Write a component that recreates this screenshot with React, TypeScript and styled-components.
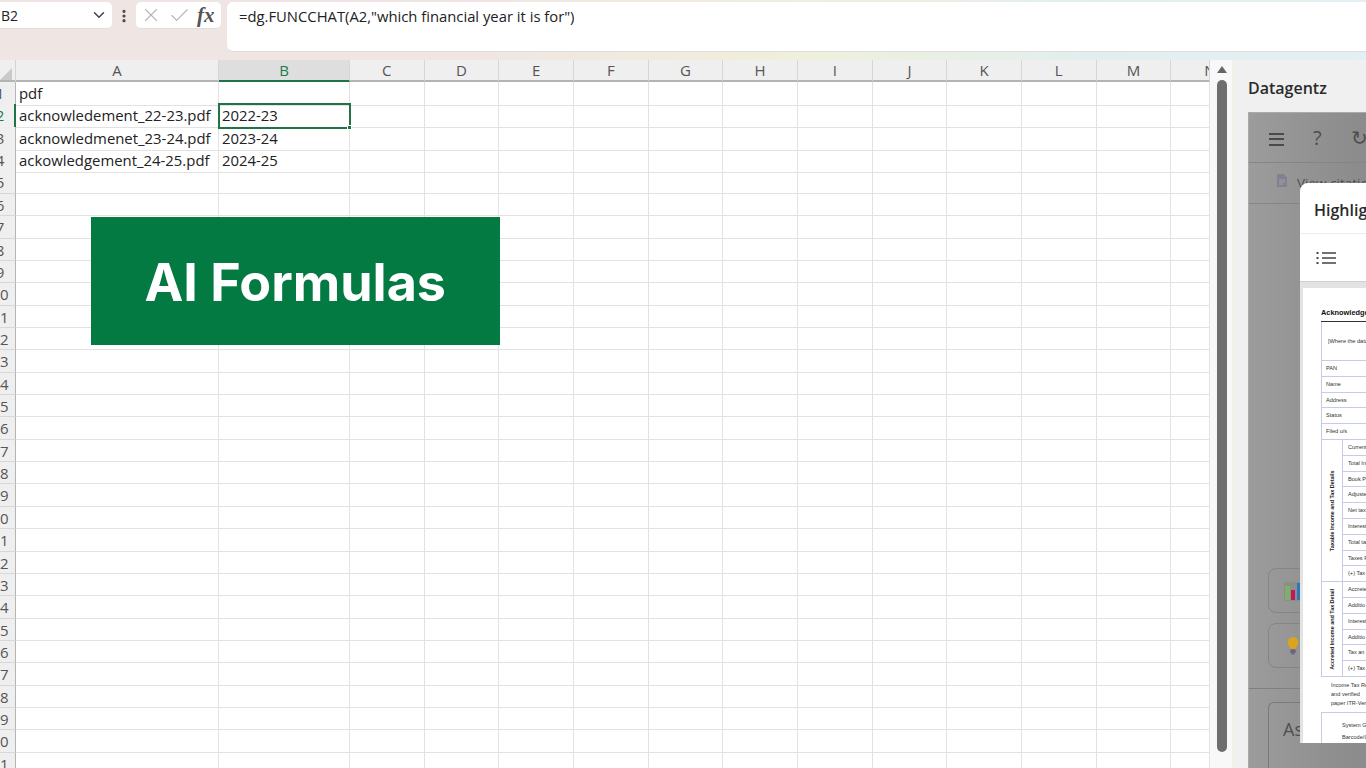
import React from 'react';
import styled, {createGlobalStyle} from 'styled-components';
import {ChevronDown, X, Check, MoreVertical} from 'lucide-react';

const GlobalStyle = createGlobalStyle`
  html, body {
    margin: 0;
    padding: 0;
    background: #fff;
  }
  * {
    box-sizing: border-box;
  }
`;

const Page = styled.div`
  width: 1366px;
  height: 768px;
  overflow: hidden;
  display: flex;
  flex-direction: column;
  font-family: "Open Sans", "Noto Sans", sans-serif;
  background: #f0f0f0;
`;

const FormulaArea = styled.header`
  height: 60px;
  flex: none;
  display: flex;
  align-items: flex-start;
  padding-top: 2px;
  background: linear-gradient(90deg, #efe6e4 0%, #efe6e3 35%, #f1ebdd 50%, #eef0dc 60%, #e2eeee 80%, #e3eff2 100%);
`;

const NameBox = styled.div`
  width: 112px;
  height: 27px;
  flex: none;
  background: #fff;
  border-radius: 0 5px 5px 0;
  border-bottom: 1px solid #ddd;
  display: flex;
  align-items: center;
  justify-content: space-between;
  padding: 0 4px 0 1px;
  font-size: 14px;
  color: #222;
`;

const Grip = styled.div`
  width: 24px;
  height: 27px;
  flex: none;
  display: flex;
  align-items: center;
  justify-content: center;
  color: #444;
`;

const FxBox = styled.div`
  width: 85px;
  height: 27px;
  flex: none;
  background: #fff;
  border-radius: 5px;
  border-bottom: 1px solid #ddd;
  display: flex;
  align-items: center;
  gap: 6px;
  padding-left: 4px;
  color: #b5b5b5;
`;

const FxLabel = styled.span`
  font-family: "Liberation Serif", serif;
  font-style: italic;
  font-weight: 700;
  font-size: 21px;
  color: #555;
`;

const FormulaInput = styled.div`
  flex: 1;
  height: 50px;
  margin-left: 6px;
  background: #fff;
  border-radius: 6px 0 0 6px;
  border-bottom: 1px solid #ddd;
  padding: 4px 0 0 12px;
  font-size: 14.8px;
  line-height: 20px;
  color: #222;
`;

const Workspace = styled.main`
  flex: 1;
  min-height: 0;
  display: flex;
`;

const Sheet = styled.section`
  position: relative;
  width: 1210px;
  flex: none;
  overflow: hidden;
  background: #fff;
`;

const COLS = '16px 203px 131px repeat(11, 74.67px) 39px';

const HeaderRow = styled.div`
  display: grid;
  grid-template-columns: ${COLS};
  height: 22px;
  background: #efefef;
  border-bottom: 2px solid #b4b4b4;
`;

const Corner = styled.div`
  position: relative;
  border-right: 1px solid #d4d4d4;
  &::after {
    content: '';
    position: absolute;
    right: 3px;
    bottom: 2px;
    border-style: solid;
    border-width: 0 0 12px 12px;
    border-color: transparent transparent #c9c9c9 transparent;
  }
`;

const ColHead = styled.div<{ $active?: boolean; $clip?: boolean }>`
  display: flex;
  align-items: center;
  justify-content: ${p => (p.$clip ? 'flex-start' : 'center')};
  padding-left: ${p => (p.$clip ? '33px' : '0')};
  overflow: hidden;
  height: 22px;
  font-size: 15px;
  color: ${p => (p.$active ? '#1f7a4d' : '#555')};
  background: ${p => (p.$active ? '#dedede' : 'transparent')};
  border-right: 1px solid #d6d6d6;
  border-bottom: 2px solid ${p => (p.$active ? '#217346' : '#b4b4b4')};
`;

const Row = styled.div`
  display: grid;
  grid-template-columns: ${COLS};
  height: 22.37px;
`;

const RowHead = styled.div<{ $active?: boolean }>`
  position: relative;
  background: #efefef;
  border-right: ${p => (p.$active ? '2px solid #217346' : '1px solid #b4b4b4')};
  border-bottom: 1px solid #d8d8d8;
  overflow: hidden;
  font-size: 15px;
  line-height: 23px;
  color: ${p => (p.$active ? '#1f7a4d' : '#555')};
  > span {
    display: block;
    width: 32px;
    margin-left: -16px;
    text-align: center;
  }
`;

const Cell = styled.div<{ $selected?: boolean }>`
  position: relative;
  padding: 0 3px;
  border-right: 1px solid #e2e2e2;
  border-bottom: 1px solid #e2e2e2;
  font-size: 14.9px;
  line-height: 23px;
  color: #222;
  white-space: nowrap;
  outline: ${p => (p.$selected ? '2px solid #217346' : 'none')};
  outline-offset: -1px;
  z-index: ${p => (p.$selected ? 1 : 0)};
`;

const FillHandle = styled.span`
  position: absolute;
  right: -3px;
  bottom: -3px;
  width: 5px;
  height: 5px;
  background: #217346;
  border: 1px solid #fff;
`;

const Banner = styled.div`
  position: absolute;
  left: 91px;
  top: 157px;
  width: 408.500px;
  height: 128px;
  background: #027a41;
  display: flex;
  align-items: center;
  justify-content: center;
  color: #fff;
  font-family: "Inter", "Open Sans", sans-serif;
  font-weight: 700;
  font-size: 52px;
  padding-top: 2px;
`;

const ScrollTrack = styled.div`
  width: 24px;
  flex: none;
  background: #f8f8f8;
  border-right: 2px solid #f4f0e4;
  display: flex;
  flex-direction: column;
  align-items: center;
  padding: 6px 0 0 2px;
`;

const ScrollArrow = styled.div`
  width: 0;
  height: 0;
  flex: none;
  border-left: 5px solid transparent;
  border-right: 5px solid transparent;
  border-bottom: 7px solid #666;
`;

const ScrollThumb = styled.div`
  width: 10px;
  height: 672px;
  flex: none;
  margin-top: 7px;
  background: #6e6e6e;
  border-radius: 5px;
`;

const SidePanel = styled.aside`
  position: relative;
  flex: 1;
  background: #f0f0f0;
  overflow: hidden;
`;

const PanelTitle = styled.h2`
  margin: 0;
  height: 52px;
  padding: 18px 0 0 14px;
  font-size: 16px;
  line-height: 20px;
  font-weight: 600;
  color: #2b2b2b;
`;

const AddIn = styled.div`
  margin-left: 14px;
  height: 656px;
  border-left: 1px solid #aaa;
  border-top: 1px solid #aaa;
  background: linear-gradient(90deg, #9c9c9c 0%, #919191 60%, #8b8b8b 100%);
  display: flex;
  flex-direction: column;
  color: #4d4d4d;
`;

const AddInToolbar = styled.div`
  height: 50px;
  flex: none;
  border-bottom: 1px solid #858585;
  display: flex;
  align-items: center;
  padding-left: 20px;
  gap: 29px;
  font-size: 20px;
  white-space: nowrap;
`;

const Burger = styled.span`
  width: 15px;
  height: 13px;
  flex: none;
  border-top: 2px solid #4a4a4a;
  border-bottom: 2px solid #4a4a4a;
  position: relative;
  margin-top: 3px;
  &::after {
    content: '';
    position: absolute;
    left: 0;
    right: 0;
    top: 3.5px;
    height: 2px;
    background: #4a4a4a;
  }
`;

const CitationRow = styled.div`
  height: 41px;
  flex: none;
  border-bottom: 1px solid #858585;
  display: flex;
  align-items: flex-start;
  gap: 10px;
  padding: 11px 0 0 28px;
  font-size: 13.5px;
  line-height: 18px;
  white-space: nowrap;
  > svg {
    flex: none;
  }
`;

const Suggestions = styled.div`
  flex: 1;
  display: flex;
  flex-direction: column;
  justify-content: flex-end;
  gap: 10px;
  padding: 0 0 20px 19px;
  border-bottom: 1px solid #7f7f7f;
`;

const SuggestCard = styled.div`
  width: 90px;
  height: 45px;
  flex: none;
  border: 1px solid #858585;
  border-radius: 8px;
  display: flex;
  align-items: center;
  padding-left: 15px;
  > svg {
    flex: none;
  }
`;

const AskBox = styled.div`
  height: 66px;
  flex: none;
  margin-left: 19px;
  margin-top: 13px;
  border-left: 1px solid #7a7a7a;
  border-top: 1px solid #7a7a7a;
  border-top-left-radius: 6px;
  padding: 14px 0 0 14px;
  font-size: 18px;
  line-height: 24px;
  color: #4f4f4f;
  white-space: nowrap;
`;

const Modal = styled.div`
  position: absolute;
  left: 66px;
  top: 123px;
  width: 300px;
  height: 560px;
  background: #fff;
  border-radius: 8px 0 0 0;
  display: flex;
  flex-direction: column;
  overflow: hidden;
`;

const ModalTitle = styled.div`
  height: 51px;
  flex: none;
  padding: 16px 0 0 14px;
  font-size: 16px;
  line-height: 22px;
  font-weight: 600;
  color: #2b2b2b;
  border-bottom: 1px solid #ededed;
  white-space: nowrap;
`;

const ModalToolbar = styled.div`
  height: 48px;
  flex: none;
  display: flex;
  align-items: center;
  padding-left: 16px;
  border-bottom: 1px solid #cfcfcf;
`;

const DocViewport = styled.div`
  flex: 1;
  min-height: 0;
  background: #e3e3e3;
  padding: 6px 0 0 3px;
`;

const DocPage = styled.div`
  height: 100%;
  background: #fff;
  padding: 19px 0 0 18px;
  font-family: "Liberation Sans", sans-serif;
  font-size: 5.6px;
  color: #333;
  white-space: nowrap;
  overflow: hidden;
`;

const DocTitle = styled.div`
  height: 15px;
  border-bottom: 1.5px solid #333;
  font-size: 7.4px;
  line-height: 12px;
  font-weight: 700;
  color: #111;
`;

const Note = styled.div`
  height: 39px;
  border-left: 1px solid #c6cbe6;
  border-bottom: 1.5px solid #c6cbe6;
  padding: 15px 0 0 6px;
  line-height: 8px;
`;

const InfoRow = styled.div`
  height: 15.8px;
  border-left: 1px solid #c6cbe6;
  border-bottom: 1px solid #c6cbe6;
  padding-left: 4px;
  line-height: 15px;
`;

const TaxSection = styled.div<{ $rows: number }>`
  display: grid;
  grid-template-columns: 21px 1fr;
  border-left: 1px solid #c6cbe6;
  border-bottom: 1.5px solid #c6cbe6;
  height: ${p => p.$rows * 15.8}px;
`;

// rotated half a turn, so its left border lands on the right
const SideLabel = styled.div`
  border-left: 1px solid #c6cbe6;
  writing-mode: vertical-rl;
  transform: rotate(180deg);
  display: flex;
  align-items: center;
  justify-content: center;
  font-weight: 700;
  color: #222;
  font-size: 5.4px;
`;

const TaxRow = styled.div`
  height: 15.8px;
  border-bottom: 1px solid #c6cbe6;
  padding-left: 5px;
  line-height: 15px;
`;

const Paragraph = styled.div`
  height: 36px;
  padding: 4px 0 0 10px;
  line-height: 9.2px;
  border-bottom: 1.5px solid #c6cbe6;
`;

const Footer = styled.div`
  border-left: 1px solid #c6cbe6;
  padding: 6px 0 0 20px;
  line-height: 12px;
`;

const columns = ['A', 'B', 'C', 'D', 'E', 'F', 'G', 'H', 'I', 'J', 'K', 'L', 'M', 'N'];
const rows: { [key: number]: [string, string] } = {
  1: ['pdf', ''],
  2: ['acknowledement_22-23.pdf', '2022-23'],
  3: ['acknowledmenet_23-24.pdf', '2023-24'],
  4: ['ackowledgement_24-25.pdf', '2024-25'],
};
const rowNumbers = Array.from({length: 31}, (_, i) => i + 1);
const info = ['PAN', 'Name', 'Address', 'Status', 'Filed u/s'];
const taxable = ['Current', 'Total In', 'Book P', 'Adjuste', 'Net tax', 'Interest', 'Total ta', 'Taxes P', '(+) Tax'];
const accreted = ['Accrete', 'Additio', 'Interest', 'Additio', 'Tax an', '(+) Tax'];

function App() {
  return (
    <Page>
      <GlobalStyle/>
      <FormulaArea>
        <NameBox>
          B2
          <ChevronDown size={18} color="#444"/>
        </NameBox>
        <Grip><MoreVertical size={16} strokeWidth={2.8}/></Grip>
        <FxBox>
          <X size={22} strokeWidth={1.2}/>
          <Check size={23} strokeWidth={1.2}/>
          <FxLabel>fx</FxLabel>
        </FxBox>
        <FormulaInput>=dg.FUNCCHAT(A2,"which financial year it is for")</FormulaInput>
      </FormulaArea>
      <Workspace>
        <Sheet>
          <HeaderRow>
            <Corner/>
            {columns.map(c =>
              <ColHead key={c} $active={c === 'B'} $clip={c === 'N'}>{c}</ColHead>
            )}
          </HeaderRow>
          {rowNumbers.map(n =>
            <Row key={n}>
              <RowHead $active={n === 2}><span>{n}</span></RowHead>
              {columns.map((c, i) => {
                const selected = n === 2 && c === 'B';
                return <Cell key={c} $selected={selected}>
                  {i < 2 && rows[n] ? rows[n][i] : ''}
                  {selected && <FillHandle/>}
                </Cell>;
              })}
            </Row>
          )}
          <Banner>AI Formulas</Banner>
        </Sheet>
        <ScrollTrack>
          <ScrollArrow/>
          <ScrollThumb/>
        </ScrollTrack>
        <SidePanel>
          <PanelTitle>Datagentz</PanelTitle>
          <AddIn>
            <AddInToolbar>
              <Burger/>
              <span>?</span>
              <span>↻</span>
            </AddInToolbar>
            <CitationRow>
              <svg width="10" height="13" viewBox="0 0 10 13">
                <path d="M0 0h6.5L10 3.5V13H0z" fill="#857f92"/>
                <path d="M2 6h6M2 8h6M2 10h4" stroke="#a9a5b3" strokeWidth="0.8"/>
              </svg>
              View citations
            </CitationRow>
            <Suggestions>
              <SuggestCard>
                <svg width="32" height="20" viewBox="0 0 32 20">
                  <rect x="0" y="1" width="32" height="19" rx="2" fill="#8a8f8a"/>
                  <rect x="1" y="5" width="5" height="14" fill="#7fb069"/>
                  <rect x="7" y="9" width="4" height="10" fill="#c2185b"/>
                  <rect x="13" y="2" width="6" height="17" fill="#2a78b5"/>
                </svg>
              </SuggestCard>
              <SuggestCard>
                <svg width="18" height="18" viewBox="-3 0 18 20">
                  <path d="M6 0a6 6 0 0 1 6 6c0 2.5-1.6 3.7-2.4 5.6-.2.6-.3 1-.3 1.4H2.700c0-.4-.1-.8-.3-1.400C1.600 9.700 0 8.500 0 6a6 6 0 0 1 6-6z" fill="#d9a520"/>
                  <rect x="3" y="13.500" width="6" height="4.500" rx="1" fill="#6f6480"/>
                  <rect x="4.500" y="18" width="3" height="1.500" fill="#6f6480"/>
                </svg>
              </SuggestCard>
            </Suggestions>
            <AskBox>Ask a question</AskBox>
          </AddIn>
          <Modal>
            <ModalTitle>Highlights</ModalTitle>
            <ModalToolbar>
              <svg width="20" height="14" viewBox="0 0 20 14" stroke="#444" strokeWidth="1.500" fill="none">
                <path d="M6 2h14M6 7h14M6 12h14"/>
                <path d="M0.500 2h2M0.500 7h2M0.500 12h2" strokeWidth="2"/>
              </svg>
            </ModalToolbar>
            <DocViewport>
              <DocPage>
                <DocTitle>Acknowledgement</DocTitle>
                <Note>[Where the data of the Return</Note>
                {info.map(t => <InfoRow key={t}>{t}</InfoRow>)}
                <TaxSection $rows={9}>
                  <SideLabel>Taxable Income and Tax Details</SideLabel>
                  <div>{taxable.map((t, i) => <TaxRow key={i}>{t}</TaxRow>)}</div>
                </TaxSection>
                <TaxSection $rows={6}>
                  <SideLabel>Accreted Income and Tax Detail</SideLabel>
                  <div>{accreted.map((t, i) => <TaxRow key={i}>{t}</TaxRow>)}</div>
                </TaxSection>
                <Paragraph>
                  Income Tax Return<br/>
                  and verified<br/>
                  paper ITR-Verification
                </Paragraph>
                <Footer>
                  System Generated<br/>
                  Barcode/QR Code
                </Footer>
              </DocPage>
            </DocViewport>
          </Modal>
        </SidePanel>
      </Workspace>
    </Page>
  );
}

export default App;
